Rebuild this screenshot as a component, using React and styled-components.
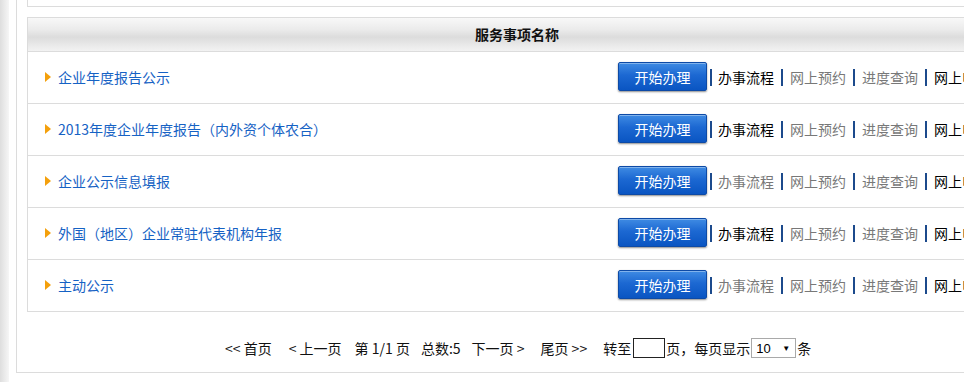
import React from "react";
import styled, { createGlobalStyle } from "styled-components";

const Global = createGlobalStyle`
  html, body { margin: 0; padding: 0; background: #fff; overflow: hidden; }
  body { font-family: "Noto Sans CJK SC", "Noto Sans", sans-serif; }
`;

const Page = styled.div`
  display: flex;
  width: 964px;
  height: 382px;
  overflow: hidden;
  background: #fff;
`;

const Shade = styled.div`
  flex: 0 0 9px;
  background: linear-gradient(to right, #dedede, #f6f6f6);
`;

const Outer = styled.div`
  flex: 0 0 auto;
  margin-left: 7px;
  width: 1040px;
  height: 372px;
  border-left: 1px solid #dcdcdc;
  border-bottom: 1px solid #dcdcdc;
  padding-left: 10px;
  box-sizing: content-box;
`;

const TopBox = styled.div`
  height: 6px;
  border: 1px solid #dcdcdc;
  border-top: none;
`;

const Table = styled.div`
  margin-top: 10px;
  width: 978px;
  border: 1px solid #dcdcdc;
`;

const Header = styled.div`
  height: 34px;
  border-bottom: 1px solid #dcdcdc;
  display: flex;
  align-items: center;
  justify-content: center;
  padding-bottom: 1px;
  box-sizing: border-box;
  background: linear-gradient(to bottom, #f8f8f8 0%, #ebebeb 35%, #dcdcdc 58%, #e9e9e9 82%, #f2f2f2 100%);
  font-size: 14px;
  font-weight: bold;
  color: #111;
`;

const Row = styled.div`
  display: flex;
  align-items: center;
  padding-bottom: 2px;
  box-sizing: border-box;
  border-bottom: ${(p) => (p.$last ? "none" : "1px solid #dcdcdc")};
  height: ${(p) => (p.$last ? "51px" : "52px")};
`;

const NameCell = styled.div`
  flex: 0 0 590px;
  display: flex;
  align-items: center;
  gap: 7px;
  padding-left: 17px;
  box-sizing: border-box;
  font-size: 14px;
  color: #1662c4;
`;

const Arrow = styled.span`
  width: 0;
  height: 0;
  margin-top: 1px;
  border-top: 5px solid transparent;
  border-bottom: 5px solid transparent;
  border-left: 6px solid #f4a00c;
`;

const Actions = styled.div`
  display: flex;
  align-items: center;
  white-space: nowrap;
`;

const StartButton = styled.button`
  width: 89px;
  height: 29px;
  margin-top: 0;
  padding: 0;
  border: 1px solid #0d4aa6;
  border-radius: 2px;
  background: linear-gradient(to bottom, #3f8be3 0%, #1c68d2 45%, #0a55c2 100%);
  box-shadow: 0 1px 2px rgba(0, 0, 0, 0.45), inset 0 1px 0 rgba(255, 255, 255, 0.35);
  color: #fff;
  font-family: "Noto Sans CJK SC", sans-serif;
  font-size: 14px;
  cursor: pointer;
`;

const Sep = styled.span`
  display: inline-block;
  width: 2px;
  height: 17px;
  background: #1c4a8c;
  margin: ${(p) => (p.$first ? "2px 6px 0 3px" : "2px 7px 0 7px")};
`;

const Link = styled.a`
  font-size: 14px;
  color: ${(p) => (p.$dark ? "#000" : "#787878")};
  text-decoration: none;
`;

const Pager = styled.div`
  height: 60px;
  display: flex;
  align-items: center;
  padding-left: 198px;
  padding-top: 12px;
  box-sizing: border-box;
  font-size: 14px;
  color: #111;
  white-space: pre;
`;

const PageItem = styled.span`
  margin-right: ${(p) => p.$mr || 0}px;
`;

const JumpInput = styled.input`
  width: 32px;
  height: 20px;
  box-sizing: border-box;
  border: 1px solid #222;
  margin: 0 1px 0 2px;
  padding: 0;
`;

const SelectBox = styled.div`
  width: 45px;
  height: 20px;
  box-sizing: border-box;
  border: 1px solid #a9a9a9;
  display: flex;
  align-items: center;
  justify-content: space-between;
  padding: 0 5px 0 4px;
  margin: 0 1px;
  font-family: "Liberation Sans", sans-serif;
  font-size: 13px;
  color: #000;
`;

const Caret = styled.span`
  font-size: 8px;
`;

const rows = [
  { name: "企业年度报告公示", flow: true },
  { name: "2013年度企业年度报告（内外资个体农合）", flow: true },
  { name: "企业公示信息填报", flow: false },
  { name: "外国（地区）企业常驻代表机构年报", flow: true },
  { name: "主动公示", flow: false },
];

export default function App() {
  return (
    <>
      <Global />
      <Page>
        <Shade />
        <Outer>
          <TopBox />
          <Table>
            <Header>服务事项名称</Header>
            {rows.map((r, i) => (
              <Row key={i} $last={i === rows.length - 1}>
                <NameCell>
                  <Arrow />
                  <span>{r.name}</span>
                </NameCell>
                <Actions>
                  <StartButton>开始办理</StartButton>
                  <Sep $first />
                  <Link $dark={r.flow}>办事流程</Link>
                  <Sep />
                  <Link>网上预约</Link>
                  <Sep />
                  <Link>进度查询</Link>
                  <Sep />
                  <Link $dark>网上申报</Link>
                </Actions>
              </Row>
            ))}
          </Table>
          <Pager>
            <PageItem $mr={17}>{"<< 首页"}</PageItem>
            <PageItem $mr={13}>{"< 上一页"}</PageItem>
            <PageItem $mr={11}>{"第 1/1 页"}</PageItem>
            <PageItem $mr={11}>{"总数:5"}</PageItem>
            <PageItem $mr={16}>{"下一页 >"}</PageItem>
            <PageItem $mr={16}>{"尾页 >>"}</PageItem>
            <PageItem>转至</PageItem>
            <JumpInput />
            <PageItem>页，每页显示</PageItem>
            <SelectBox>
              <span>10</span>
              <Caret>▼</Caret>
            </SelectBox>
            <PageItem>条</PageItem>
          </Pager>
        </Outer>
      </Page>
    </>
  );
}
